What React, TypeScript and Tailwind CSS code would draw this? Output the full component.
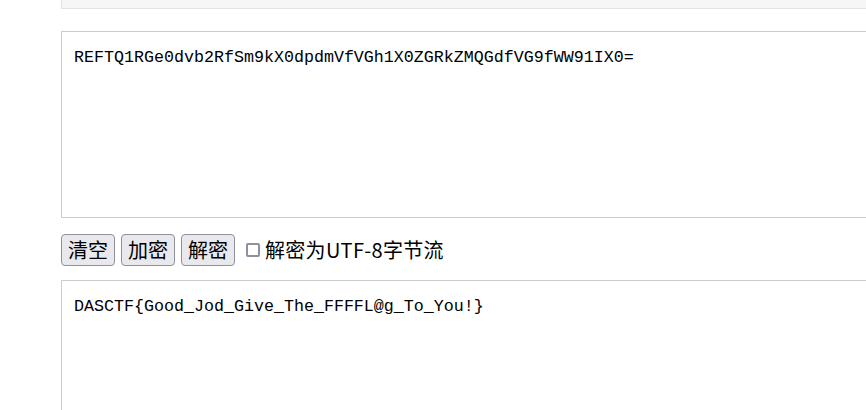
import { useState } from 'react'

// Base64 编解码工具页面

const mono = { fontFamily: '"Liberation Mono", "Noto Sans CJK SC", monospace' }

export default function App() {
  const [input, setInput] = useState('REFTQ1RGe0dvb2RfSm9kX0dpdmVfVGh1X0ZGRkZMQGdfVG9fWW91IX0=')
  const [output, setOutput] = useState('DASCTF{Good_Jod_Give_The_FFFFL@g_To_You!}')
  const [utf8, setUtf8] = useState(false)

  return (
    <div className="h-[410px] w-[866px] overflow-hidden bg-white pl-[61px] font-['Noto_Sans_CJK_SC',sans-serif] text-black">
      {/* 顶部区域 */}
      <div className="h-[9px] w-[900px] border-x border-b border-[#e3e3e3] bg-[#f6f6f6]" />

      {/* 输入框 */}
      <textarea
        value={input}
        onChange={(e) => setInput(e.target.value)}
        style={mono}
        className="mt-[22px] block h-[187px] w-[900px] resize-none overflow-hidden border border-[#cccccc] px-3 pt-[14px] text-[16.67px] leading-[24px] outline-none"
      />

      {/* 操作按钮 */}
      <div className="mt-[16px] flex h-[32px] items-center">
        <button className="h-[32px] w-[54px] rounded-[4px] border border-[#8f8f9d] bg-[#e9e9ed] text-[20px] leading-none">
          清空
        </button>
        <button className="ml-[6px] h-[32px] w-[54px] rounded-[4px] border border-[#8f8f9d] bg-[#e9e9ed] text-[20px] leading-none">
          加密
        </button>
        <button className="ml-[6px] h-[32px] w-[54px] rounded-[4px] border border-[#8f8f9d] bg-[#e9e9ed] text-[20px] leading-none">
          解密
        </button>
        <label className="ml-[11px] flex items-center text-[20px] leading-none">
          <input
            type="checkbox"
            checked={utf8}
            onChange={(e) => setUtf8(e.target.checked)}
            className="h-[14px] w-[14px] appearance-none rounded-[2px] border-2 border-[#8f8f9d] bg-white"
          />
          <span className="ml-[5px] tracking-[0.3px]">解密为UTF-8字节流</span>
        </label>
      </div>

      {/* 输出框 */}
      <textarea
        value={output}
        onChange={(e) => setOutput(e.target.value)}
        style={mono}
        className="mt-[14px] block h-[187px] w-[900px] resize-none overflow-hidden border border-[#cccccc] px-3 pt-[14px] text-[16.67px] leading-[24px] outline-none"
      />
    </div>
  )
}
